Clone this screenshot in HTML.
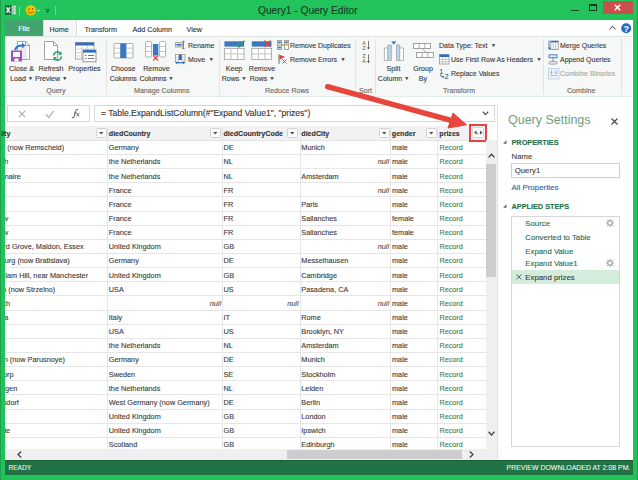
<!DOCTYPE html><html><head><meta charset="utf-8"><style>
html,body{margin:0;padding:0;}
body{width:638px;height:480px;position:relative;overflow:hidden;background:#22c35a;font-family:"Liberation Sans", sans-serif;}
.t{position:absolute;white-space:nowrap;-webkit-text-stroke:0.12px currentColor;}
.b{position:absolute;box-sizing:border-box;}
.s{position:absolute;overflow:visible;}
</style></head><body>
<svg class="s" style="left:4.7px;top:5.2px" width="11" height="10" viewBox="0 0 11 10"><rect x="5" y="0.8" width="5.8" height="8.4" fill="#d6e8dc"/><path d="M8 0.8v8.4M5.5 3h5.3M5.5 5h5.3M5.5 7h5.3" stroke="#6a9a7a" stroke-width="0.5"/><rect x="0" y="0" width="6.6" height="10" fill="#1d6b3e"/><path d="M1.5 2.4l3.4 5.2M4.9 2.4l-3.4 5.2" stroke="#fff" stroke-width="1.3"/></svg>
<div class="b" style="left:19px;top:6px;width:1px;height:9px;background:#7ccf96"></div>
<svg class="s" style="left:24.5px;top:5px" width="12" height="11" viewBox="0 0 12 11"><circle cx="5.8" cy="5.3" r="5.3" fill="#f6c200"/><ellipse cx="4.1" cy="3.9" rx="0.7" ry="0.9" fill="#6a5000"/><ellipse cx="7.5" cy="3.9" rx="0.7" ry="0.9" fill="#6a5000"/><path d="M2.3 6.2 Q5.8 9.8 9.3 6.2" stroke="#7a5a00" stroke-width="0.8" fill="none"/></svg>
<svg class="s" style="left:37.3px;top:10.4px" width="3" height="2" viewBox="0 0 3 2"><path d="M0 0h3l-1.5 1.8z" fill="#c4e8cf"/></svg>
<svg class="s" style="left:44.5px;top:9px" width="5" height="4" viewBox="0 0 5 4"><path d="M0.5 0.5h4" stroke="#1a3a26" stroke-width="0.7"/><path d="M0.6 1.8h3.8l-1.9 2z" fill="#1a3a26"/></svg>
<div class="b" style="left:55px;top:6px;width:1px;height:9px;background:#7ccf96"></div>
<div class="t" style="left:258px;top:5.38px;font-size:10.2px;line-height:12.24px;color:#1a3a26;font-weight:normal;font-style:normal;">Query1 - Query Editor</div>
<div class="b" style="left:571px;top:10px;width:8px;height:1px;background:#1a4a2c"></div>
<div class="b" style="left:589px;top:4px;width:8px;height:7px;border:1px solid #1a3a26;border-top-width:2px"></div>
<div class="b" style="left:603px;top:1px;width:30px;height:13px;background:#c9504e"></div>
<svg class="s" style="left:614px;top:4px" width="7" height="7" viewBox="0 0 7 7"><path d="M0.8 0.8l5.4 5.4M6.2 0.8l-5.4 5.4" stroke="#fff" stroke-width="1.5"/></svg>
<div class="b" style="left:5px;top:20px;width:628px;height:16px;background:#fff"></div>
<div class="b" style="left:5px;top:20px;width:38px;height:16px;background:#42a36e"></div>
<div class="t" style="left:24px;top:25.08px;font-size:7.2px;line-height:8.64px;color:#fff;font-weight:normal;font-style:normal;transform:translateX(-50%)">File</div>
<div class="b" style="left:43px;top:20px;width:34px;height:17px;background:#f6f8f7;border-left:1px solid #dcdcdc;border-right:1px solid #dcdcdc"></div>
<div class="t" style="left:49.5px;top:25.88px;font-size:7.2px;line-height:8.64px;color:#333;font-weight:normal;font-style:normal;">Home</div>
<div class="t" style="left:84.5px;top:25.88px;font-size:7.2px;line-height:8.64px;color:#333;font-weight:normal;font-style:normal;">Transform</div>
<div class="t" style="left:132.5px;top:25.88px;font-size:7.2px;line-height:8.64px;color:#333;font-weight:normal;font-style:normal;">Add Column</div>
<div class="t" style="left:186.5px;top:25.88px;font-size:7.2px;line-height:8.64px;color:#333;font-weight:normal;font-style:normal;">View</div>
<svg class="s" style="left:609px;top:25px" width="7" height="5" viewBox="0 0 7 5"><path d="M0.5 4.5L3.5 1.2L6.5 4.5" stroke="#666" stroke-width="1.1" fill="none"/></svg>
<svg class="s" style="left:620.5px;top:23px" width="11" height="11" viewBox="0 0 11 11"><circle cx="5.2" cy="5.2" r="5" fill="#1f6fc5"/><text x="5.2" y="8.6" font-size="9" font-weight="bold" text-anchor="middle" fill="#fff" font-family="Liberation Sans">?</text></svg>
<div class="b" style="left:5px;top:36px;width:627px;height:61px;background:#f6f8f7;border-top:1px solid #dde3df;border-bottom:1px solid #e3ece6"></div>
<div class="b" style="left:632px;top:36px;width:1px;height:61px;background:#fff"></div>
<div class="b" style="left:106px;top:39px;width:1px;height:55px;background:#e2e4e3"></div>
<div class="b" style="left:219px;top:39px;width:1px;height:55px;background:#e2e4e3"></div>
<div class="b" style="left:355px;top:39px;width:1px;height:55px;background:#e2e4e3"></div>
<div class="b" style="left:375px;top:39px;width:1px;height:55px;background:#e2e4e3"></div>
<div class="b" style="left:543px;top:39px;width:1px;height:55px;background:#e2e4e3"></div>
<div class="b" style="left:620.5px;top:39px;width:1px;height:55px;background:#e2e4e3"></div>
<div class="t" style="left:46.2px;top:86.94px;font-size:7.1px;line-height:8.52px;color:#6a6a6a;font-weight:normal;font-style:normal;">Query</div>
<div class="t" style="left:134px;top:86.94px;font-size:7.1px;line-height:8.52px;color:#6a6a6a;font-weight:normal;font-style:normal;">Manage Columns</div>
<div class="t" style="left:265px;top:86.94px;font-size:7.1px;line-height:8.52px;color:#6a6a6a;font-weight:normal;font-style:normal;">Reduce Rows</div>
<div class="t" style="left:359px;top:86.94px;font-size:7.1px;line-height:8.52px;color:#6a6a6a;font-weight:normal;font-style:normal;">Sort</div>
<div class="t" style="left:443px;top:86.94px;font-size:7.1px;line-height:8.52px;color:#6a6a6a;font-weight:normal;font-style:normal;">Transform</div>
<div class="t" style="left:567px;top:86.94px;font-size:7.1px;line-height:8.52px;color:#6a6a6a;font-weight:normal;font-style:normal;">Combine</div>
<div class="t" style="left:21.5px;top:65.14px;font-size:7.1px;line-height:8.52px;color:#3c3c3c;font-weight:normal;font-style:normal;transform:translateX(-50%)">Close &amp;</div>
<div class="t" style="left:21.5px;top:74.74px;font-size:7.1px;line-height:8.52px;color:#3c3c3c;font-weight:normal;font-style:normal;transform:translateX(-50%)">Load<span style="display:inline-block;width:2px"></span><span style="font-size:5px;position:relative;top:-1px">&#9660;</span></div>
<div class="t" style="left:51px;top:65.14px;font-size:7.1px;line-height:8.52px;color:#3c3c3c;font-weight:normal;font-style:normal;transform:translateX(-50%)">Refresh</div>
<div class="t" style="left:51px;top:74.74px;font-size:7.1px;line-height:8.52px;color:#3c3c3c;font-weight:normal;font-style:normal;transform:translateX(-50%)">Preview<span style="display:inline-block;width:2px"></span><span style="font-size:5px;position:relative;top:-1px">&#9660;</span></div>
<div class="t" style="left:84.5px;top:65.14px;font-size:7.1px;line-height:8.52px;color:#3c3c3c;font-weight:normal;font-style:normal;transform:translateX(-50%)">Properties</div>
<div class="t" style="left:84.5px;top:74.74px;font-size:7.1px;line-height:8.52px;color:#3c3c3c;font-weight:normal;font-style:normal;transform:translateX(-50%)"></div>
<div class="t" style="left:123.2px;top:65.14px;font-size:7.1px;line-height:8.52px;color:#3c3c3c;font-weight:normal;font-style:normal;transform:translateX(-50%)">Choose</div>
<div class="t" style="left:123.2px;top:74.74px;font-size:7.1px;line-height:8.52px;color:#3c3c3c;font-weight:normal;font-style:normal;transform:translateX(-50%)"><span style="letter-spacing:-0.15px">Columns</span></div>
<div class="t" style="left:156.4px;top:65.14px;font-size:7.1px;line-height:8.52px;color:#3c3c3c;font-weight:normal;font-style:normal;transform:translateX(-50%)">Remove</div>
<div class="t" style="left:156.4px;top:74.74px;font-size:7.1px;line-height:8.52px;color:#3c3c3c;font-weight:normal;font-style:normal;transform:translateX(-50%)"><span style="letter-spacing:-0.15px">Columns</span><span style="display:inline-block;width:2px"></span><span style="font-size:5px;position:relative;top:-1px">&#9660;</span></div>
<div class="t" style="left:234px;top:65.14px;font-size:7.1px;line-height:8.52px;color:#3c3c3c;font-weight:normal;font-style:normal;transform:translateX(-50%)">Keep</div>
<div class="t" style="left:234px;top:74.74px;font-size:7.1px;line-height:8.52px;color:#3c3c3c;font-weight:normal;font-style:normal;transform:translateX(-50%)">Rows<span style="display:inline-block;width:2px"></span><span style="font-size:5px;position:relative;top:-1px">&#9660;</span></div>
<div class="t" style="left:262px;top:65.14px;font-size:7.1px;line-height:8.52px;color:#3c3c3c;font-weight:normal;font-style:normal;transform:translateX(-50%)">Remove</div>
<div class="t" style="left:262px;top:74.74px;font-size:7.1px;line-height:8.52px;color:#3c3c3c;font-weight:normal;font-style:normal;transform:translateX(-50%)">Rows<span style="display:inline-block;width:2px"></span><span style="font-size:5px;position:relative;top:-1px">&#9660;</span></div>
<div class="t" style="left:393.5px;top:65.14px;font-size:7.1px;line-height:8.52px;color:#3c3c3c;font-weight:normal;font-style:normal;transform:translateX(-50%)">Split</div>
<div class="t" style="left:393.5px;top:74.74px;font-size:7.1px;line-height:8.52px;color:#3c3c3c;font-weight:normal;font-style:normal;transform:translateX(-50%)">Column<span style="display:inline-block;width:2px"></span><span style="font-size:5px;position:relative;top:-1px">&#9660;</span></div>
<div class="t" style="left:423px;top:65.14px;font-size:7.1px;line-height:8.52px;color:#3c3c3c;font-weight:normal;font-style:normal;transform:translateX(-50%)">Group</div>
<div class="t" style="left:423px;top:74.74px;font-size:7.1px;line-height:8.52px;color:#3c3c3c;font-weight:normal;font-style:normal;transform:translateX(-50%)">By</div>
<div class="t" style="left:188px;top:41.80px;font-size:7.0px;line-height:8.40px;color:#3c3c3c;font-weight:normal;font-style:normal;">Rename</div>
<div class="t" style="left:188px;top:56.10px;font-size:7.0px;line-height:8.40px;color:#3c3c3c;font-weight:normal;font-style:normal;">Move<span style="display:inline-block;width:3.5px"></span><span style="font-size:5px;position:relative;top:-1px">&#9660;</span></div>
<div class="t" style="left:290px;top:41.80px;font-size:7.0px;line-height:8.40px;color:#3c3c3c;font-weight:normal;font-style:normal;">Remove Duplicates</div>
<div class="t" style="left:290px;top:55.80px;font-size:7.0px;line-height:8.40px;color:#3c3c3c;font-weight:normal;font-style:normal;">Remove Errors<span style="display:inline-block;width:3.5px"></span><span style="font-size:5px;position:relative;top:-1px">&#9660;</span></div>
<div class="t" style="left:439px;top:41.80px;font-size:7.0px;line-height:8.40px;color:#3c3c3c;font-weight:normal;font-style:normal;">Data Type: Text<span style="display:inline-block;width:3.5px"></span><span style="font-size:5px;position:relative;top:-1px">&#9660;</span></div>
<div class="t" style="left:451px;top:55.80px;font-size:7.0px;line-height:8.40px;color:#3c3c3c;font-weight:normal;font-style:normal;">Use First Row As Headers<span style="display:inline-block;width:3.5px"></span><span style="font-size:5px;position:relative;top:-1px">&#9660;</span></div>
<div class="t" style="left:451px;top:69.50px;font-size:7.0px;line-height:8.40px;color:#3c3c3c;font-weight:normal;font-style:normal;">Replace Values</div>
<div class="t" style="left:560px;top:41.80px;font-size:7.0px;line-height:8.40px;color:#3c3c3c;font-weight:normal;font-style:normal;">Merge Queries</div>
<div class="t" style="left:560px;top:55.80px;font-size:7.0px;line-height:8.40px;color:#3c3c3c;font-weight:normal;font-style:normal;">Append Queries</div>
<div class="t" style="left:560px;top:69.50px;font-size:7.0px;line-height:8.40px;color:#a8a8a8;font-weight:normal;font-style:normal;">Combine Binaries</div>
<svg class="s" style="left:10px;top:40px" width="23" height="23" viewBox="0 0 23 23">
<path d="M7.5 1.5h8l4 4v14h-12z" fill="#fff" stroke="#9a9a9a" stroke-width="0.9"/>
<path d="M15.5 1.5v4h4" fill="none" stroke="#9a9a9a" stroke-width="0.9"/>
<path d="M10 8h7M10 10h7M10 12h7M12 14h5M12 16h5M12 18h5" stroke="#c8c8c8" stroke-width="0.8"/>
<rect x="1" y="10.5" width="11" height="11" fill="#9b52c0"/>
<rect x="3" y="12" width="7" height="5" fill="#fff"/>
<rect x="4.5" y="18.5" width="4" height="3" fill="#fff"/>
<path d="M5 10 Q6.5 5 13 5.5" stroke="#2e75c6" stroke-width="2" fill="none"/>
<path d="M12 2.5l3.5 3-3.5 3z" fill="#2e75c6"/></svg>
<svg class="s" style="left:43px;top:40px" width="21" height="23" viewBox="0 0 21 23">
<path d="M1.5 1.5h9l4 4v14h-13z" fill="#fff" stroke="#9a9a9a" stroke-width="0.9"/>
<path d="M10.5 1.5v4h4" fill="none" stroke="#9a9a9a" stroke-width="0.9"/>
<path d="M10.5 15.5 a4 4 0 0 1 7.5 -1.5" stroke="#3a9a6a" stroke-width="1.6" fill="none"/>
<path d="M18.5 11.5v3.5h-3.5z" fill="#3a9a6a"/>
<path d="M18.5 16.5 a4 4 0 0 1 -7.5 1.5" stroke="#3a9a6a" stroke-width="1.6" fill="none"/>
<path d="M10.5 20.5v-3.5h3.5z" fill="#3a9a6a"/></svg>
<svg class="s" style="left:75px;top:42px" width="22" height="21" viewBox="0 0 22 21">
<rect x="0.5" y="0.5" width="18.5" height="16.5" fill="#fff" stroke="#a0a0a0" stroke-width="0.9"/>
<rect x="0.5" y="0.5" width="18.5" height="3" fill="#2e6fc0"/>
<path d="M0.5 7h18.5M0.5 10.5h18.5M0.5 14h18.5M6.5 3.5v13.5M12.5 3.5v13.5" stroke="#c8c8c8" stroke-width="0.8"/>
<rect x="8" y="8" width="13" height="11.8" fill="#fff" stroke="#8a8a8a" stroke-width="0.9"/>
<rect x="8" y="8" width="13" height="2.6" fill="#2e6fc0"/>
<path d="M10 13.5h1.5M13 13.5h6M10 16.5h1.5M13 16.5h6" stroke="#666" stroke-width="0.9"/></svg>
<svg class="s" style="left:113px;top:43px" width="21" height="16" viewBox="0 0 21 16">
<rect x="1" y="0.5" width="19" height="14.5" rx="1" fill="#fff" stroke="#a6a6a6" stroke-width="0.9"/>
<path d="M1 5.2h19M1 10h19" stroke="#b8b8b8" stroke-width="0.8"/>
<rect x="7.2" y="0.5" width="6.2" height="14.5" fill="#3a78c2"/></svg>
<svg class="s" style="left:145px;top:41px" width="22" height="21" viewBox="0 0 22 21">
<rect x="0.6" y="0.5" width="6" height="15.5" rx="1" fill="#fff" stroke="#a6a6a6" stroke-width="0.9"/>
<path d="M0.6 5.5h6M0.6 10.5h6" stroke="#b8b8b8" stroke-width="0.8"/>
<rect x="14.6" y="0.5" width="6" height="15.5" rx="1" fill="#fff" stroke="#a6a6a6" stroke-width="0.9"/>
<path d="M14.6 5.5h6M14.6 10.5h6" stroke="#b8b8b8" stroke-width="0.8"/>
<rect x="8" y="3" width="5.3" height="11.5" fill="#3a78c2"/>
<path d="M8.2 14.5l5 5M13.2 14.5l-5 5" stroke="#d9443a" stroke-width="1.1"/></svg>
<svg class="s" style="left:175px;top:41px" width="10" height="8" viewBox="0 0 10 8">
<rect x="0.5" y="1.5" width="7" height="4.5" fill="#e8e8e8" stroke="#999" stroke-width="0.8"/>
<rect x="1.5" y="3" width="5" height="1.6" fill="#2e6fc0"/>
<path d="M8.5 0.3v7.4M7.3 0.3h2.4M7.3 7.7h2.4" stroke="#555" stroke-width="0.7"/></svg>
<svg class="s" style="left:175px;top:54px" width="11" height="11" viewBox="0 0 11 11">
<rect x="0.5" y="0.5" width="9.5" height="8" fill="#fff" stroke="#999" stroke-width="0.8"/>
<path d="M3.5 0.5v8M7 0.5v8M0.5 3h9.5M0.5 5.7h9.5" stroke="#aaa" stroke-width="0.6"/>
<rect x="3.8" y="0.5" width="3" height="5.5" fill="#2e6fc0"/>
<path d="M1 8.7h8.5" stroke="#2e6fc0" stroke-width="1.2"/>
<path d="M0.5 8.7l2-1.8v3.6zM10 8.7l-2-1.8v3.6z" fill="#2e6fc0"/></svg>
<svg class="s" style="left:223px;top:40px" width="23" height="21" viewBox="0 0 23 21">
<rect x="1.4" y="1.3" width="19.7" height="5.3" fill="#3a78c2"/>
<rect x="1.4" y="8.4" width="19.7" height="11" fill="#fff" stroke="#a6a6a6" stroke-width="0.9"/>
<path d="M1.4 13.9h19.7M8 8.4v11M14.5 8.4v11" stroke="#b8b8b8" stroke-width="0.8"/>
<path d="M13 4l3 3 5.5-6.2" stroke="#2f9a5a" stroke-width="1.5" fill="none"/></svg>
<svg class="s" style="left:251px;top:40px" width="23" height="21" viewBox="0 0 23 21">
<rect x="0.8" y="1.3" width="19.7" height="5.3" fill="#3a78c2"/>
<rect x="0.8" y="8.4" width="19.7" height="11" fill="#fff" stroke="#a6a6a6" stroke-width="0.9"/>
<path d="M0.8 13.9h19.7M7.4 8.4v11M13.9 8.4v11" stroke="#b8b8b8" stroke-width="0.8"/>
<path d="M13.5 0.5l6 6.5M19.5 0.5l-6 6.5" stroke="#d9443a" stroke-width="1.2"/></svg>
<svg class="s" style="left:277px;top:40px" width="12" height="10" viewBox="0 0 12 10">
<rect x="0.6" y="0.5" width="3.8" height="9" fill="#fff" stroke="#8a8a8a" stroke-width="0.8"/>
<rect x="1.2" y="1.5" width="2.6" height="1.8" fill="#2e6fc0"/><rect x="1.2" y="4" width="2.6" height="1.8" fill="#e8b13a"/><rect x="1.2" y="6.6" width="2.6" height="1.8" fill="#2e6fc0"/>
<rect x="7.6" y="0.5" width="3.8" height="9" fill="#fff" stroke="#8a8a8a" stroke-width="0.8"/>
<rect x="8.2" y="1.5" width="2.6" height="1.8" fill="#2e6fc0"/><rect x="8.2" y="4" width="2.6" height="1.8" fill="#e8b13a"/>
<path d="M5 5h2" stroke="#2e6fc0" stroke-width="0.8"/></svg>
<svg class="s" style="left:278px;top:54px" width="10" height="10" viewBox="0 0 10 10">
<path d="M1 0.3v9.5" stroke="#555" stroke-width="0.9"/>
<path d="M1.5 0.8l5.5 2-5.5 3z" fill="#d9443a"/>
<path d="M4.5 5.5l4 4M8.5 5.5l-4 4" stroke="#d9443a" stroke-width="1"/></svg>
<svg class="s" style="left:361px;top:40px" width="10" height="24" viewBox="0 0 10 24">
<text x="3" y="4.6" font-size="5.2" font-family="Liberation Sans" text-anchor="middle" fill="#555">A</text>
<text x="3" y="9.6" font-size="5.2" font-family="Liberation Sans" text-anchor="middle" fill="#555">Z</text>
<path d="M7.5 1v8" stroke="#555" stroke-width="0.8"/><path d="M6 7.5h3l-1.5 2z" fill="#555"/>
<text x="3" y="18" font-size="5.2" font-family="Liberation Sans" text-anchor="middle" fill="#555">Z</text>
<text x="3" y="23" font-size="5.2" font-family="Liberation Sans" text-anchor="middle" fill="#555">A</text>
<path d="M7.5 14.3v8" stroke="#555" stroke-width="0.8"/><path d="M6 21h3l-1.5 2z" fill="#555"/></svg>
<svg class="s" style="left:383px;top:41px" width="22" height="21" viewBox="0 0 22 21">
<path d="M8.2 0.6h5.2l-2.6 2.8z" fill="#2e6fc0"/>
<rect x="1.3" y="7" width="3.6" height="12.5" fill="#fff" stroke="#a6a6a6" stroke-width="0.8"/>
<rect x="4.9" y="4" width="3.4" height="15.5" fill="#bcd5ee" stroke="#a6a6a6" stroke-width="0.8"/>
<rect x="13.4" y="4" width="3.4" height="15.5" fill="#bcd5ee" stroke="#a6a6a6" stroke-width="0.8"/>
<rect x="16.8" y="7" width="3.6" height="12.5" fill="#fff" stroke="#a6a6a6" stroke-width="0.8"/></svg>
<svg class="s" style="left:413px;top:43px" width="22" height="16" viewBox="0 0 22 16">
<rect x="0.5" y="0.5" width="17" height="5" fill="#fff" stroke="#999" stroke-width="0.9"/>
<path d="M6.2 0.5v5M11.8 0.5v5" stroke="#999" stroke-width="0.8"/>
<rect x="3.5" y="9.5" width="17" height="5" fill="#fff" stroke="#999" stroke-width="0.9"/>
<path d="M9.2 9.5v5M14.8 9.5v5" stroke="#999" stroke-width="0.8"/>
<path d="M9 5.5l4.5 4" stroke="#999" stroke-width="0.8"/></svg>
<svg class="s" style="left:439px;top:54px" width="11" height="11" viewBox="0 0 11 11">
<rect x="0.5" y="0.5" width="9.5" height="9.5" fill="#fff" stroke="#999" stroke-width="0.8"/>
<rect x="0.5" y="0.5" width="9.5" height="2.5" fill="#2e6fc0"/>
<path d="M0.5 5.5h9.5M0.5 7.8h9.5M3.6 3v7M6.8 3v7" stroke="#aaa" stroke-width="0.6"/></svg>
<svg class="s" style="left:439px;top:68px" width="12" height="12" viewBox="0 0 12 12">
<text x="2.4" y="6" font-size="6.8" font-family="Liberation Sans" fill="#333" text-anchor="middle">1</text>
<text x="7.6" y="10.6" font-size="7" font-family="Liberation Sans" fill="#333" text-anchor="middle">2</text>
<path d="M1.3 6.2q0 2.8 3 2.8" stroke="#2e6fc0" stroke-width="0.9" fill="none"/><path d="M3.8 7.4l1.7 1.6-1.7 1.6z" fill="#2e6fc0"/></svg>
<svg class="s" style="left:547.5px;top:40px" width="11" height="11" viewBox="0 0 11 11">
<rect x="2.8" y="1.2" width="7.4" height="8.2" fill="#fff" stroke="#8a8a8a" stroke-width="0.8"/>
<rect x="2.8" y="0.8" width="7.4" height="1.6" fill="#2e6fc0"/>
<path d="M5.2 2.4v7M7.7 2.4v7" stroke="#999" stroke-width="0.6"/>
<path d="M1 0.5v8.2h2" stroke="#2e6fc0" stroke-width="0.9" fill="none"/><path d="M0 7.4l1.2 2.6 1.4-2.4z" fill="#2e6fc0"/></svg>
<svg class="s" style="left:548px;top:54px" width="11" height="11" viewBox="0 0 11 11">
<rect x="1" y="0.8" width="8" height="3" fill="#dbe7f5" stroke="#2e6fc0" stroke-width="0.8"/>
<path d="M5 3.8v3.5" stroke="#5a7fb0" stroke-width="0.9"/>
<rect x="1" y="7.5" width="8" height="2.6" rx="1.2" fill="#eee" stroke="#8a8a8a" stroke-width="0.8"/></svg>
<svg class="s" style="left:547.5px;top:68px" width="12" height="12" viewBox="0 0 12 12">
<rect x="0.5" y="0.5" width="10.5" height="10.5" fill="#eaf1f9" stroke="#bccde0" stroke-width="0.8"/>
<path d="M3.5 2.5v3M8 2.5v3" stroke="#7d9fc8" stroke-width="0.8"/><path d="M2.4 4.8h2.2l-1.1 1.3zM6.9 4.8h2.2l-1.1 1.3z" fill="#7d9fc8"/>
<path d="M2 7.5h7.5" stroke="#9db6d3" stroke-width="0.8"/></svg>
<div class="b" style="left:5px;top:97px;width:628px;height:363px;background:#fff"></div>
<div class="b" style="left:7px;top:105px;width:83px;height:17px;border:1px solid #d6d6d6;background:#fff"></div>
<svg class="s" style="left:17.5px;top:109.8px" width="9" height="9" viewBox="0 0 9 9"><path d="M1 1l6 6M7 1L1 7" stroke="#b4b4b4" stroke-width="1.2"/></svg>
<svg class="s" style="left:44.5px;top:109.5px" width="10" height="9" viewBox="0 0 10 9"><path d="M0.8 4.2l3 3.3L8.8 0.8" stroke="#b4b4b4" stroke-width="1.4" fill="none"/></svg>
<svg class="s" style="left:71px;top:108px" width="10" height="11" viewBox="0 0 10 11"><path d="M1.2 9.6 Q2.4 10.2 3.2 8.2 L4.6 3.2 Q5.3 1.2 6.8 1.6" stroke="#6e6e6e" stroke-width="1.1" fill="none" stroke-linecap="round"/><path d="M3 5h3" stroke="#6e6e6e" stroke-width="0.9"/><path d="M5.6 5.2 L8.2 8.4 M8.2 5.2 L5.4 8.4" stroke="#6e6e6e" stroke-width="1"/></svg>
<div class="b" style="left:94px;top:105px;width:401px;height:17px;border:1px solid #d6d6d6;background:#fff"></div>
<div class="t" style="left:101px;top:108.26px;font-size:8.56px;line-height:10.27px;color:#333;font-weight:normal;font-style:normal;">= Table.ExpandListColumn(#"Expand Value1", "prizes")</div>
<svg class="s" style="left:482px;top:111px" width="7" height="5" viewBox="0 0 7 5"><path d="M0.8 0.8L3.5 3.6L6.2 0.8" stroke="#555" stroke-width="1.3" fill="none"/></svg>
<div class="b" style="left:5px;top:126px;width:480.5px;height:14px;background:#f2f2f2"></div>
<div class="b" style="left:5px;top:139.6px;width:480.5px;height:1px;background:#e4e4e4"></div>
<div class="b" style="left:106.9px;top:126px;width:1px;height:14px;background:#e2e2e2"></div>
<div class="b" style="left:222.0px;top:126px;width:1px;height:14px;background:#e2e2e2"></div>
<div class="b" style="left:299.5px;top:126px;width:1px;height:14px;background:#e2e2e2"></div>
<div class="b" style="left:389.5px;top:126px;width:1px;height:14px;background:#e2e2e2"></div>
<div class="b" style="left:437.0px;top:126px;width:1px;height:14px;background:#e2e2e2"></div>
<div class="t" style="right:627.6px;top:130.34px;font-size:7.1px;line-height:8.52px;color:#333;font-weight:bold;font-style:normal;text-align:right;">birthCity</div>
<div class="t" style="left:108.8px;top:130.34px;font-size:7.1px;line-height:8.52px;color:#333;font-weight:bold;font-style:normal;">diedCountry</div>
<div class="t" style="left:223.5px;top:130.34px;font-size:7.1px;line-height:8.52px;color:#333;font-weight:bold;font-style:normal;">diedCountryCode</div>
<div class="t" style="left:301.3px;top:130.34px;font-size:7.1px;line-height:8.52px;color:#333;font-weight:bold;font-style:normal;">diedCity</div>
<div class="t" style="left:391.8px;top:130.34px;font-size:7.1px;line-height:8.52px;color:#333;font-weight:bold;font-style:normal;">gender</div>
<div class="t" style="left:439.3px;top:130.34px;font-size:7.1px;line-height:8.52px;color:#333;font-weight:bold;font-style:normal;">prizes</div>
<div class="b" style="left:95.5px;top:127.5px;width:11px;height:10.8px;background:#fbfcfe;border:1px solid #d2d2d2;border-radius:1.5px"></div>
<svg class="s" style="left:98.7px;top:131.8px" width="5" height="3" viewBox="0 0 5 3"><path d="M0 0h4.5l-2.25 2.6z" fill="#555"/></svg>
<div class="b" style="left:209.5px;top:127.5px;width:11px;height:10.8px;background:#fbfcfe;border:1px solid #d2d2d2;border-radius:1.5px"></div>
<svg class="s" style="left:212.7px;top:131.8px" width="5" height="3" viewBox="0 0 5 3"><path d="M0 0h4.5l-2.25 2.6z" fill="#555"/></svg>
<div class="b" style="left:287px;top:127.5px;width:11px;height:10.8px;background:#fbfcfe;border:1px solid #d2d2d2;border-radius:1.5px"></div>
<svg class="s" style="left:290.2px;top:131.8px" width="5" height="3" viewBox="0 0 5 3"><path d="M0 0h4.5l-2.25 2.6z" fill="#555"/></svg>
<div class="b" style="left:378.7px;top:127.5px;width:11px;height:10.8px;background:#fbfcfe;border:1px solid #d2d2d2;border-radius:1.5px"></div>
<svg class="s" style="left:381.9px;top:131.8px" width="5" height="3" viewBox="0 0 5 3"><path d="M0 0h4.5l-2.25 2.6z" fill="#555"/></svg>
<div class="b" style="left:425.7px;top:127.5px;width:11px;height:10.8px;background:#fbfcfe;border:1px solid #d2d2d2;border-radius:1.5px"></div>
<svg class="s" style="left:428.9px;top:131.8px" width="5" height="3" viewBox="0 0 5 3"><path d="M0 0h4.5l-2.25 2.6z" fill="#555"/></svg>
<div class="b" style="left:472px;top:127px;width:12px;height:11.3px;background:#fafbfd;border:1px solid #d3d7dd;border-radius:1.5px"></div>
<svg class="s" style="left:473.8px;top:130px" width="9" height="6" viewBox="0 0 9 6"><path d="M0 2.6l2.6-2.2v4.4z" fill="#555"/><path d="M8.6 2.6l-2.6-2.2v4.4z" fill="#555"/><path d="M3.3 3.4h2" stroke="#999" stroke-width="1"/></svg>
<div class="b" style="left:469px;top:123.9px;width:17.8px;height:17.8px;border:2.1px solid #e5443e"></div>
<div style="position:absolute;left:5px;top:140.4px;width:481px;height:308.6px;overflow:hidden">
<div class="b" style="left:0;top:13.64px;width:481px;height:1px;background:#e6e6e6"></div>
<div class="b" style="left:0;top:27.78px;width:481px;height:1px;background:#e6e6e6"></div>
<div class="b" style="left:0;top:41.92px;width:481px;height:1px;background:#e6e6e6"></div>
<div class="b" style="left:0;top:56.06px;width:481px;height:1px;background:#e6e6e6"></div>
<div class="b" style="left:0;top:70.20px;width:481px;height:1px;background:#e6e6e6"></div>
<div class="b" style="left:0;top:84.34px;width:481px;height:1px;background:#e6e6e6"></div>
<div class="b" style="left:0;top:98.48px;width:481px;height:1px;background:#e6e6e6"></div>
<div class="b" style="left:0;top:112.62px;width:481px;height:1px;background:#e6e6e6"></div>
<div class="b" style="left:0;top:126.76px;width:481px;height:1px;background:#e6e6e6"></div>
<div class="b" style="left:0;top:140.90px;width:481px;height:1px;background:#e6e6e6"></div>
<div class="b" style="left:0;top:155.04px;width:481px;height:1px;background:#e6e6e6"></div>
<div class="b" style="left:0;top:169.18px;width:481px;height:1px;background:#e6e6e6"></div>
<div class="b" style="left:0;top:183.32px;width:481px;height:1px;background:#e6e6e6"></div>
<div class="b" style="left:0;top:197.46px;width:481px;height:1px;background:#e6e6e6"></div>
<div class="b" style="left:0;top:211.60px;width:481px;height:1px;background:#e6e6e6"></div>
<div class="b" style="left:0;top:225.74px;width:481px;height:1px;background:#e6e6e6"></div>
<div class="b" style="left:0;top:239.88px;width:481px;height:1px;background:#e6e6e6"></div>
<div class="b" style="left:0;top:254.02px;width:481px;height:1px;background:#e6e6e6"></div>
<div class="b" style="left:0;top:268.16px;width:481px;height:1px;background:#e6e6e6"></div>
<div class="b" style="left:0;top:282.30px;width:481px;height:1px;background:#e6e6e6"></div>
<div class="b" style="left:0;top:296.44px;width:481px;height:1px;background:#e6e6e6"></div>
<div class="b" style="left:0;top:310.58px;width:481px;height:1px;background:#e6e6e6"></div>
<div class="b" style="left:0;top:324.72px;width:481px;height:1px;background:#e6e6e6"></div>
<div class="b" style="left:101.9px;top:0;width:1px;height:309px;background:#e6e6e6"></div>
<div class="b" style="left:217.0px;top:0;width:1px;height:309px;background:#e6e6e6"></div>
<div class="b" style="left:294.5px;top:0;width:1px;height:309px;background:#e6e6e6"></div>
<div class="b" style="left:384.5px;top:0;width:1px;height:309px;background:#e6e6e6"></div>
<div class="b" style="left:432.0px;top:0;width:1px;height:309px;background:#e6e6e6"></div>
<div class="t" style="left:-140.9px;width:200px;text-align:right;top:3.89px;font-size:7.3px;line-height:8.76px;color:#404040;font-style:normal">Lenne (now Remscheid)</div>
<div class="t" style="left:103.8px;top:3.89px;font-size:7.3px;line-height:8.76px;color:#404040;font-weight:normal;font-style:normal;">Germany</div>
<div class="t" style="left:218.5px;top:3.89px;font-size:7.3px;line-height:8.76px;color:#404040;font-weight:normal;font-style:normal;">DE</div>
<div class="t" style="left:296.3px;top:3.89px;font-size:7.3px;line-height:8.76px;color:#404040;font-weight:normal;font-style:normal;">Munich</div>
<div class="t" style="left:387px;top:3.89px;font-size:7.3px;line-height:8.76px;color:#404040;font-weight:normal;font-style:normal;">male</div>
<div class="t" style="left:434.5px;top:3.95px;font-size:7.2px;line-height:8.64px;color:#3a7f56;font-weight:normal;font-style:normal;">Record</div>
<div class="t" style="left:-196.6px;width:200px;text-align:right;top:18.03px;font-size:7.3px;line-height:8.76px;color:#404040;font-style:normal">Munih</div>
<div class="t" style="left:103.8px;top:18.03px;font-size:7.3px;line-height:8.76px;color:#404040;font-weight:normal;font-style:normal;">the Netherlands</div>
<div class="t" style="left:218.5px;top:18.03px;font-size:7.3px;line-height:8.76px;color:#404040;font-weight:normal;font-style:normal;">NL</div>
<div class="t" style="left:184px;width:200px;text-align:right;top:18.03px;font-size:7.3px;line-height:8.76px;color:#555;font-style:italic">null</div>
<div class="t" style="left:387px;top:18.03px;font-size:7.3px;line-height:8.76px;color:#404040;font-weight:normal;font-style:normal;">male</div>
<div class="t" style="left:434.5px;top:18.09px;font-size:7.2px;line-height:8.64px;color:#3a7f56;font-weight:normal;font-style:normal;">Record</div>
<div class="t" style="left:-184.1px;width:200px;text-align:right;top:32.17px;font-size:7.3px;line-height:8.76px;color:#404040;font-style:normal">Zonnenaire</div>
<div class="t" style="left:103.8px;top:32.17px;font-size:7.3px;line-height:8.76px;color:#404040;font-weight:normal;font-style:normal;">the Netherlands</div>
<div class="t" style="left:218.5px;top:32.17px;font-size:7.3px;line-height:8.76px;color:#404040;font-weight:normal;font-style:normal;">NL</div>
<div class="t" style="left:296.3px;top:32.17px;font-size:7.3px;line-height:8.76px;color:#404040;font-weight:normal;font-style:normal;">Amsterdam</div>
<div class="t" style="left:387px;top:32.17px;font-size:7.3px;line-height:8.76px;color:#404040;font-weight:normal;font-style:normal;">male</div>
<div class="t" style="left:434.5px;top:32.23px;font-size:7.2px;line-height:8.64px;color:#3a7f56;font-weight:normal;font-style:normal;">Record</div>
<div class="t" style="left:103.8px;top:46.31px;font-size:7.3px;line-height:8.76px;color:#404040;font-weight:normal;font-style:normal;">France</div>
<div class="t" style="left:218.5px;top:46.31px;font-size:7.3px;line-height:8.76px;color:#404040;font-weight:normal;font-style:normal;">FR</div>
<div class="t" style="left:184px;width:200px;text-align:right;top:46.31px;font-size:7.3px;line-height:8.76px;color:#555;font-style:italic">null</div>
<div class="t" style="left:387px;top:46.31px;font-size:7.3px;line-height:8.76px;color:#404040;font-weight:normal;font-style:normal;">male</div>
<div class="t" style="left:434.5px;top:46.37px;font-size:7.2px;line-height:8.64px;color:#3a7f56;font-weight:normal;font-style:normal;">Record</div>
<div class="t" style="left:103.8px;top:60.45px;font-size:7.3px;line-height:8.76px;color:#404040;font-weight:normal;font-style:normal;">France</div>
<div class="t" style="left:218.5px;top:60.45px;font-size:7.3px;line-height:8.76px;color:#404040;font-weight:normal;font-style:normal;">FR</div>
<div class="t" style="left:296.3px;top:60.45px;font-size:7.3px;line-height:8.76px;color:#404040;font-weight:normal;font-style:normal;">Paris</div>
<div class="t" style="left:387px;top:60.45px;font-size:7.3px;line-height:8.76px;color:#404040;font-weight:normal;font-style:normal;">male</div>
<div class="t" style="left:434.5px;top:60.51px;font-size:7.2px;line-height:8.64px;color:#3a7f56;font-weight:normal;font-style:normal;">Record</div>
<div class="t" style="left:-196.6px;width:200px;text-align:right;top:74.59px;font-size:7.3px;line-height:8.76px;color:#404040;font-style:normal">Pariv</div>
<div class="t" style="left:103.8px;top:74.59px;font-size:7.3px;line-height:8.76px;color:#404040;font-weight:normal;font-style:normal;">France</div>
<div class="t" style="left:218.5px;top:74.59px;font-size:7.3px;line-height:8.76px;color:#404040;font-weight:normal;font-style:normal;">FR</div>
<div class="t" style="left:296.3px;top:74.59px;font-size:7.3px;line-height:8.76px;color:#404040;font-weight:normal;font-style:normal;">Sallanches</div>
<div class="t" style="left:387px;top:74.59px;font-size:7.3px;line-height:8.76px;color:#404040;font-weight:normal;font-style:normal;">female</div>
<div class="t" style="left:434.5px;top:74.65px;font-size:7.2px;line-height:8.64px;color:#3a7f56;font-weight:normal;font-style:normal;">Record</div>
<div class="t" style="left:-196.6px;width:200px;text-align:right;top:88.73px;font-size:7.3px;line-height:8.76px;color:#404040;font-style:normal">Pariv</div>
<div class="t" style="left:103.8px;top:88.73px;font-size:7.3px;line-height:8.76px;color:#404040;font-weight:normal;font-style:normal;">France</div>
<div class="t" style="left:218.5px;top:88.73px;font-size:7.3px;line-height:8.76px;color:#404040;font-weight:normal;font-style:normal;">FR</div>
<div class="t" style="left:296.3px;top:88.73px;font-size:7.3px;line-height:8.76px;color:#404040;font-weight:normal;font-style:normal;">Sallanches</div>
<div class="t" style="left:387px;top:88.73px;font-size:7.3px;line-height:8.76px;color:#404040;font-weight:normal;font-style:normal;">female</div>
<div class="t" style="left:434.5px;top:88.79px;font-size:7.2px;line-height:8.64px;color:#3a7f56;font-weight:normal;font-style:normal;">Record</div>
<div class="t" style="left:-121.3px;width:200px;text-align:right;top:102.87px;font-size:7.3px;line-height:8.76px;color:#404040;font-style:normal">Chard Groverd Grove, Maldon, Essex</div>
<div class="t" style="left:103.8px;top:102.87px;font-size:7.3px;line-height:8.76px;color:#404040;font-weight:normal;font-style:normal;">United Kingdom</div>
<div class="t" style="left:218.5px;top:102.87px;font-size:7.3px;line-height:8.76px;color:#404040;font-weight:normal;font-style:normal;">GB</div>
<div class="t" style="left:184px;width:200px;text-align:right;top:102.87px;font-size:7.3px;line-height:8.76px;color:#555;font-style:italic">null</div>
<div class="t" style="left:387px;top:102.87px;font-size:7.3px;line-height:8.76px;color:#404040;font-weight:normal;font-style:normal;">male</div>
<div class="t" style="left:434.5px;top:102.93px;font-size:7.2px;line-height:8.64px;color:#3a7f56;font-weight:normal;font-style:normal;">Record</div>
<div class="t" style="left:-135.3px;width:200px;text-align:right;top:117.01px;font-size:7.3px;line-height:8.76px;color:#404040;font-style:normal">Pressburg (now Bratislava)</div>
<div class="t" style="left:103.8px;top:117.01px;font-size:7.3px;line-height:8.76px;color:#404040;font-weight:normal;font-style:normal;">Germany</div>
<div class="t" style="left:218.5px;top:117.01px;font-size:7.3px;line-height:8.76px;color:#404040;font-weight:normal;font-style:normal;">DE</div>
<div class="t" style="left:296.3px;top:117.01px;font-size:7.3px;line-height:8.76px;color:#404040;font-weight:normal;font-style:normal;">Messelhausen</div>
<div class="t" style="left:387px;top:117.01px;font-size:7.3px;line-height:8.76px;color:#404040;font-weight:normal;font-style:normal;">male</div>
<div class="t" style="left:434.5px;top:117.07px;font-size:7.2px;line-height:8.64px;color:#3a7f56;font-weight:normal;font-style:normal;">Record</div>
<div class="t" style="left:-116.9px;width:200px;text-align:right;top:131.15px;font-size:7.3px;line-height:8.76px;color:#404040;font-style:normal">Cheetham Hillam Hill, near Manchester</div>
<div class="t" style="left:103.8px;top:131.15px;font-size:7.3px;line-height:8.76px;color:#404040;font-weight:normal;font-style:normal;">United Kingdom</div>
<div class="t" style="left:218.5px;top:131.15px;font-size:7.3px;line-height:8.76px;color:#404040;font-weight:normal;font-style:normal;">GB</div>
<div class="t" style="left:296.3px;top:131.15px;font-size:7.3px;line-height:8.76px;color:#404040;font-weight:normal;font-style:normal;">Cambridge</div>
<div class="t" style="left:387px;top:131.15px;font-size:7.3px;line-height:8.76px;color:#404040;font-weight:normal;font-style:normal;">male</div>
<div class="t" style="left:434.5px;top:131.21px;font-size:7.2px;line-height:8.64px;color:#3a7f56;font-weight:normal;font-style:normal;">Record</div>
<div class="t" style="left:-149.7px;width:200px;text-align:right;top:145.29px;font-size:7.3px;line-height:8.76px;color:#404040;font-style:normal">Strelno (now Strzelno)</div>
<div class="t" style="left:103.8px;top:145.29px;font-size:7.3px;line-height:8.76px;color:#404040;font-weight:normal;font-style:normal;">USA</div>
<div class="t" style="left:218.5px;top:145.29px;font-size:7.3px;line-height:8.76px;color:#404040;font-weight:normal;font-style:normal;">US</div>
<div class="t" style="left:296.3px;top:145.29px;font-size:7.3px;line-height:8.76px;color:#404040;font-weight:normal;font-style:normal;">Pasadena, CA</div>
<div class="t" style="left:387px;top:145.29px;font-size:7.3px;line-height:8.76px;color:#404040;font-weight:normal;font-style:normal;">male</div>
<div class="t" style="left:434.5px;top:145.35px;font-size:7.2px;line-height:8.64px;color:#3a7f56;font-weight:normal;font-style:normal;">Record</div>
<div class="t" style="left:-194.9px;width:200px;text-align:right;top:159.43px;font-size:7.3px;line-height:8.76px;color:#404040;font-style:normal">Munich</div>
<div class="t" style="left:16px;width:200px;text-align:right;top:159.43px;font-size:7.3px;line-height:8.76px;color:#555;font-style:italic">null</div>
<div class="t" style="left:93.5px;width:200px;text-align:right;top:159.43px;font-size:7.3px;line-height:8.76px;color:#555;font-style:italic">null</div>
<div class="t" style="left:184px;width:200px;text-align:right;top:159.43px;font-size:7.3px;line-height:8.76px;color:#555;font-style:italic">null</div>
<div class="t" style="left:387px;top:159.43px;font-size:7.3px;line-height:8.76px;color:#404040;font-weight:normal;font-style:normal;">male</div>
<div class="t" style="left:434.5px;top:159.49px;font-size:7.2px;line-height:8.64px;color:#3a7f56;font-weight:normal;font-style:normal;">Record</div>
<div class="t" style="left:-196.6px;width:200px;text-align:right;top:173.57px;font-size:7.3px;line-height:8.76px;color:#404040;font-style:normal">China</div>
<div class="t" style="left:103.8px;top:173.57px;font-size:7.3px;line-height:8.76px;color:#404040;font-weight:normal;font-style:normal;">Italy</div>
<div class="t" style="left:218.5px;top:173.57px;font-size:7.3px;line-height:8.76px;color:#404040;font-weight:normal;font-style:normal;">IT</div>
<div class="t" style="left:296.3px;top:173.57px;font-size:7.3px;line-height:8.76px;color:#404040;font-weight:normal;font-style:normal;">Rome</div>
<div class="t" style="left:387px;top:173.57px;font-size:7.3px;line-height:8.76px;color:#404040;font-weight:normal;font-style:normal;">male</div>
<div class="t" style="left:434.5px;top:173.63px;font-size:7.2px;line-height:8.64px;color:#3a7f56;font-weight:normal;font-style:normal;">Record</div>
<div class="t" style="left:103.8px;top:187.71px;font-size:7.3px;line-height:8.76px;color:#404040;font-weight:normal;font-style:normal;">USA</div>
<div class="t" style="left:218.5px;top:187.71px;font-size:7.3px;line-height:8.76px;color:#404040;font-weight:normal;font-style:normal;">US</div>
<div class="t" style="left:296.3px;top:187.71px;font-size:7.3px;line-height:8.76px;color:#404040;font-weight:normal;font-style:normal;">Brooklyn, NY</div>
<div class="t" style="left:387px;top:187.71px;font-size:7.3px;line-height:8.76px;color:#404040;font-weight:normal;font-style:normal;">male</div>
<div class="t" style="left:434.5px;top:187.77px;font-size:7.2px;line-height:8.64px;color:#3a7f56;font-weight:normal;font-style:normal;">Record</div>
<div class="t" style="left:103.8px;top:201.85px;font-size:7.3px;line-height:8.76px;color:#404040;font-weight:normal;font-style:normal;">the Netherlands</div>
<div class="t" style="left:218.5px;top:201.85px;font-size:7.3px;line-height:8.76px;color:#404040;font-weight:normal;font-style:normal;">NL</div>
<div class="t" style="left:296.3px;top:201.85px;font-size:7.3px;line-height:8.76px;color:#404040;font-weight:normal;font-style:normal;">Amsterdam</div>
<div class="t" style="left:387px;top:201.85px;font-size:7.3px;line-height:8.76px;color:#404040;font-weight:normal;font-style:normal;">male</div>
<div class="t" style="left:434.5px;top:201.91px;font-size:7.2px;line-height:8.64px;color:#3a7f56;font-weight:normal;font-style:normal;">Record</div>
<div class="t" style="left:-140.1px;width:200px;text-align:right;top:215.99px;font-size:7.3px;line-height:8.76px;color:#404040;font-style:normal">Prussian (now Parusnoye)</div>
<div class="t" style="left:103.8px;top:215.99px;font-size:7.3px;line-height:8.76px;color:#404040;font-weight:normal;font-style:normal;">Germany</div>
<div class="t" style="left:218.5px;top:215.99px;font-size:7.3px;line-height:8.76px;color:#404040;font-weight:normal;font-style:normal;">DE</div>
<div class="t" style="left:296.3px;top:215.99px;font-size:7.3px;line-height:8.76px;color:#404040;font-weight:normal;font-style:normal;">Munich</div>
<div class="t" style="left:387px;top:215.99px;font-size:7.3px;line-height:8.76px;color:#404040;font-weight:normal;font-style:normal;">male</div>
<div class="t" style="left:434.5px;top:216.05px;font-size:7.2px;line-height:8.64px;color:#3a7f56;font-weight:normal;font-style:normal;">Record</div>
<div class="t" style="left:-191.4px;width:200px;text-align:right;top:230.13px;font-size:7.3px;line-height:8.76px;color:#404040;font-style:normal">Ålesund Hilstorp</div>
<div class="t" style="left:103.8px;top:230.13px;font-size:7.3px;line-height:8.76px;color:#404040;font-weight:normal;font-style:normal;">Sweden</div>
<div class="t" style="left:218.5px;top:230.13px;font-size:7.3px;line-height:8.76px;color:#404040;font-weight:normal;font-style:normal;">SE</div>
<div class="t" style="left:296.3px;top:230.13px;font-size:7.3px;line-height:8.76px;color:#404040;font-weight:normal;font-style:normal;">Stockholm</div>
<div class="t" style="left:387px;top:230.13px;font-size:7.3px;line-height:8.76px;color:#404040;font-weight:normal;font-style:normal;">male</div>
<div class="t" style="left:434.5px;top:230.19px;font-size:7.2px;line-height:8.64px;color:#3a7f56;font-weight:normal;font-style:normal;">Record</div>
<div class="t" style="left:-187.8px;width:200px;text-align:right;top:244.27px;font-size:7.3px;line-height:8.76px;color:#404040;font-style:normal">Rotterdam Delfzijl Groningen</div>
<div class="t" style="left:103.8px;top:244.27px;font-size:7.3px;line-height:8.76px;color:#404040;font-weight:normal;font-style:normal;">the Netherlands</div>
<div class="t" style="left:218.5px;top:244.27px;font-size:7.3px;line-height:8.76px;color:#404040;font-weight:normal;font-style:normal;">NL</div>
<div class="t" style="left:296.3px;top:244.27px;font-size:7.3px;line-height:8.76px;color:#404040;font-weight:normal;font-style:normal;">Leiden</div>
<div class="t" style="left:387px;top:244.27px;font-size:7.3px;line-height:8.76px;color:#404040;font-weight:normal;font-style:normal;">male</div>
<div class="t" style="left:434.5px;top:244.33px;font-size:7.2px;line-height:8.64px;color:#3a7f56;font-weight:normal;font-style:normal;">Record</div>
<div class="t" style="left:-186.1px;width:200px;text-align:right;top:258.41px;font-size:7.3px;line-height:8.76px;color:#404040;font-style:normal">Düsseldorf Eschendorf</div>
<div class="t" style="left:103.8px;top:258.41px;font-size:7.3px;line-height:8.76px;color:#404040;font-weight:normal;font-style:normal;">West Germany (now Germany)</div>
<div class="t" style="left:218.5px;top:258.41px;font-size:7.3px;line-height:8.76px;color:#404040;font-weight:normal;font-style:normal;">DE</div>
<div class="t" style="left:296.3px;top:258.41px;font-size:7.3px;line-height:8.76px;color:#404040;font-weight:normal;font-style:normal;">Berlin</div>
<div class="t" style="left:387px;top:258.41px;font-size:7.3px;line-height:8.76px;color:#404040;font-weight:normal;font-style:normal;">male</div>
<div class="t" style="left:434.5px;top:258.47px;font-size:7.2px;line-height:8.64px;color:#3a7f56;font-weight:normal;font-style:normal;">Record</div>
<div class="t" style="left:103.8px;top:272.55px;font-size:7.3px;line-height:8.76px;color:#404040;font-weight:normal;font-style:normal;">United Kingdom</div>
<div class="t" style="left:218.5px;top:272.55px;font-size:7.3px;line-height:8.76px;color:#404040;font-weight:normal;font-style:normal;">GB</div>
<div class="t" style="left:296.3px;top:272.55px;font-size:7.3px;line-height:8.76px;color:#404040;font-weight:normal;font-style:normal;">London</div>
<div class="t" style="left:387px;top:272.55px;font-size:7.3px;line-height:8.76px;color:#404040;font-weight:normal;font-style:normal;">male</div>
<div class="t" style="left:434.5px;top:272.61px;font-size:7.2px;line-height:8.64px;color:#3a7f56;font-weight:normal;font-style:normal;">Record</div>
<div class="t" style="left:-194.9px;width:200px;text-align:right;top:286.69px;font-size:7.3px;line-height:8.76px;color:#404040;font-style:normal">Newcastle</div>
<div class="t" style="left:103.8px;top:286.69px;font-size:7.3px;line-height:8.76px;color:#404040;font-weight:normal;font-style:normal;">United Kingdom</div>
<div class="t" style="left:218.5px;top:286.69px;font-size:7.3px;line-height:8.76px;color:#404040;font-weight:normal;font-style:normal;">GB</div>
<div class="t" style="left:296.3px;top:286.69px;font-size:7.3px;line-height:8.76px;color:#404040;font-weight:normal;font-style:normal;">Ipswich</div>
<div class="t" style="left:387px;top:286.69px;font-size:7.3px;line-height:8.76px;color:#404040;font-weight:normal;font-style:normal;">male</div>
<div class="t" style="left:434.5px;top:286.75px;font-size:7.2px;line-height:8.64px;color:#3a7f56;font-weight:normal;font-style:normal;">Record</div>
<div class="t" style="left:-198.5px;width:200px;text-align:right;top:300.83px;font-size:7.3px;line-height:8.76px;color:#404040;font-style:normal">Edinburgh.</div>
<div class="t" style="left:103.8px;top:300.83px;font-size:7.3px;line-height:8.76px;color:#404040;font-weight:normal;font-style:normal;">Scotland</div>
<div class="t" style="left:218.5px;top:300.83px;font-size:7.3px;line-height:8.76px;color:#404040;font-weight:normal;font-style:normal;">GB</div>
<div class="t" style="left:296.3px;top:300.83px;font-size:7.3px;line-height:8.76px;color:#404040;font-weight:normal;font-style:normal;">Edinburgh</div>
<div class="t" style="left:387px;top:300.83px;font-size:7.3px;line-height:8.76px;color:#404040;font-weight:normal;font-style:normal;">male</div>
<div class="t" style="left:434.5px;top:300.89px;font-size:7.2px;line-height:8.64px;color:#3a7f56;font-weight:normal;font-style:normal;">Record</div>
</div>
<div class="b" style="left:485.5px;top:140px;width:12px;height:309px;background:#efefef"></div>
<div class="b" style="left:486.3px;top:164px;width:10px;height:113px;background:#cdcdcd"></div>
<svg class="s" style="left:488px;top:152.6px" width="7" height="5" viewBox="0 0 7 5"><path d="M0.6 4.4L3.5 1.2L6.4 4.4" stroke="#444" stroke-width="1.4" fill="none"/></svg>
<svg class="s" style="left:488px;top:431px" width="7" height="5" viewBox="0 0 7 5"><path d="M0.6 0.8L3.5 4L6.4 0.8" stroke="#444" stroke-width="1.3" fill="none"/></svg>
<div class="b" style="left:5px;top:449px;width:492px;height:11px;background:#efefef"></div>
<div class="b" style="left:287px;top:449.5px;width:175px;height:9px;background:#cdcdcd"></div>
<svg class="s" style="left:17px;top:451px" width="5" height="7" viewBox="0 0 5 7"><path d="M4.2 0.6L1 3.5L4.2 6.4" stroke="#444" stroke-width="1.3" fill="none"/></svg>
<svg class="s" style="left:469px;top:451px" width="5" height="7" viewBox="0 0 5 7"><path d="M0.8 0.6L4 3.5L0.8 6.4" stroke="#444" stroke-width="1.3" fill="none"/></svg>
<div class="b" style="left:497px;top:105px;width:1px;height:355px;background:#e4e4e4"></div>
<div class="t" style="left:507.5px;top:112.12px;font-size:12.8px;line-height:15.36px;color:#6aa283;font-weight:normal;font-style:normal;transform:scaleX(0.975);transform-origin:0 0;-webkit-text-stroke:0">Query Settings</div>
<svg class="s" style="left:611px;top:117.5px" width="7" height="7" viewBox="0 0 7 7"><path d="M0.5 0.5l6 6M6.5 0.5l-6 6" stroke="#444" stroke-width="1.1"/></svg>
<svg class="s" style="left:503px;top:140px" width="4" height="4" viewBox="0 0 4 4"><path d="M3.5 0.3v3.4H0.1z" fill="#666"/></svg>
<div class="t" style="left:511.5px;top:139.02px;font-size:7.3px;line-height:8.76px;color:#217346;font-weight:bold;font-style:normal;">PROPERTIES</div>
<div class="t" style="left:511.5px;top:151.92px;font-size:7.8px;line-height:9.36px;color:#444;font-weight:normal;font-style:normal;">Name</div>
<div class="b" style="left:511px;top:162.5px;width:109px;height:15px;border:1px solid #cfcfcf;background:#fff"></div>
<div class="t" style="left:514.7px;top:166.32px;font-size:7.8px;line-height:9.36px;color:#444;font-weight:normal;font-style:normal;">Query1</div>
<div class="t" style="left:511.5px;top:183.16px;font-size:7.9px;line-height:9.48px;color:#2b62a8;font-weight:normal;font-style:normal;">All Properties</div>
<svg class="s" style="left:503px;top:203.5px" width="4" height="4" viewBox="0 0 4 4"><path d="M3.5 0.3v3.4H0.1z" fill="#666"/></svg>
<div class="t" style="left:511.5px;top:202.52px;font-size:7.3px;line-height:8.76px;color:#217346;font-weight:bold;font-style:normal;">APPLIED STEPS</div>
<div class="b" style="left:511px;top:216px;width:109px;height:230.5px;border:1px solid #d6d6d6;background:#fff"></div>
<div class="b" style="left:512px;top:270px;width:107px;height:13.7px;background:#d4ecdc"></div>
<div class="t" style="left:525.3px;top:219.32px;font-size:7.8px;line-height:9.36px;color:#316a4a;font-weight:normal;font-style:normal;">Source</div>
<div class="t" style="left:525.3px;top:232.92px;font-size:7.8px;line-height:9.36px;color:#316a4a;font-weight:normal;font-style:normal;">Converted to Table</div>
<div class="t" style="left:525.3px;top:246.52px;font-size:7.8px;line-height:9.36px;color:#316a4a;font-weight:normal;font-style:normal;">Expand Value</div>
<div class="t" style="left:525.3px;top:259.42px;font-size:7.8px;line-height:9.36px;color:#316a4a;font-weight:normal;font-style:normal;">Expand Value1</div>
<div class="t" style="left:525.3px;top:272.72px;font-size:7.8px;line-height:9.36px;color:#404040;font-weight:normal;font-style:normal;">Expand prizes</div>
<svg class="s" style="left:515.5px;top:274px" width="6" height="6" viewBox="0 0 6 6"><path d="M0.4 0.4l5 5M5.4 0.4l-5 5" stroke="#555" stroke-width="0.9"/></svg>
<svg class="s" style="left:606.4px;top:219px" width="8" height="8" viewBox="0 0 8 8"><g transform="translate(4 4)"><circle r="2.2" fill="none" stroke="#999" stroke-width="1"/><rect x="-0.6" y="-3.8" width="1.2" height="1.6" fill="#999" transform="rotate(0)"/><rect x="-0.6" y="-3.8" width="1.2" height="1.6" fill="#999" transform="rotate(45)"/><rect x="-0.6" y="-3.8" width="1.2" height="1.6" fill="#999" transform="rotate(90)"/><rect x="-0.6" y="-3.8" width="1.2" height="1.6" fill="#999" transform="rotate(135)"/><rect x="-0.6" y="-3.8" width="1.2" height="1.6" fill="#999" transform="rotate(180)"/><rect x="-0.6" y="-3.8" width="1.2" height="1.6" fill="#999" transform="rotate(225)"/><rect x="-0.6" y="-3.8" width="1.2" height="1.6" fill="#999" transform="rotate(270)"/><rect x="-0.6" y="-3.8" width="1.2" height="1.6" fill="#999" transform="rotate(315)"/></g></svg>
<svg class="s" style="left:606.4px;top:259.3px" width="8" height="8" viewBox="0 0 8 8"><g transform="translate(4 4)"><circle r="2.2" fill="none" stroke="#999" stroke-width="1"/><rect x="-0.6" y="-3.8" width="1.2" height="1.6" fill="#999" transform="rotate(0)"/><rect x="-0.6" y="-3.8" width="1.2" height="1.6" fill="#999" transform="rotate(45)"/><rect x="-0.6" y="-3.8" width="1.2" height="1.6" fill="#999" transform="rotate(90)"/><rect x="-0.6" y="-3.8" width="1.2" height="1.6" fill="#999" transform="rotate(135)"/><rect x="-0.6" y="-3.8" width="1.2" height="1.6" fill="#999" transform="rotate(180)"/><rect x="-0.6" y="-3.8" width="1.2" height="1.6" fill="#999" transform="rotate(225)"/><rect x="-0.6" y="-3.8" width="1.2" height="1.6" fill="#999" transform="rotate(270)"/><rect x="-0.6" y="-3.8" width="1.2" height="1.6" fill="#999" transform="rotate(315)"/></g></svg>
<div class="b" style="left:5px;top:460px;width:628px;height:15px;background:#217346;border-top:1px solid #1a6139"></div>
<div class="t" style="left:8.4px;top:464.44px;font-size:6.6px;line-height:7.92px;color:#e6f2ea;font-weight:normal;font-style:normal;">READY</div>
<div class="t" style="left:506.5px;top:464.03px;font-size:6.95px;line-height:8.34px;color:#e6f2ea;font-weight:normal;font-style:normal;">PREVIEW DOWNLOADED AT 2:08 PM.</div>
<div class="b" style="left:0px;top:0px;width:1px;height:480px;background:#1ea34c"></div>
<div class="b" style="left:637px;top:0px;width:1px;height:480px;background:#1ea34c"></div>
<svg class="s" style="left:0px;top:0px" width="638" height="480" viewBox="0 0 638 480">
<path d="M327.6 86.7 L452 120.6" stroke="#e6463c" stroke-width="5.4" stroke-linecap="round"/>
<path d="M466.5 124.8 L453 113 L448 128 Z" fill="#e6463c" stroke="#e6463c" stroke-width="1" stroke-linejoin="round"/></svg>
</body></html>
